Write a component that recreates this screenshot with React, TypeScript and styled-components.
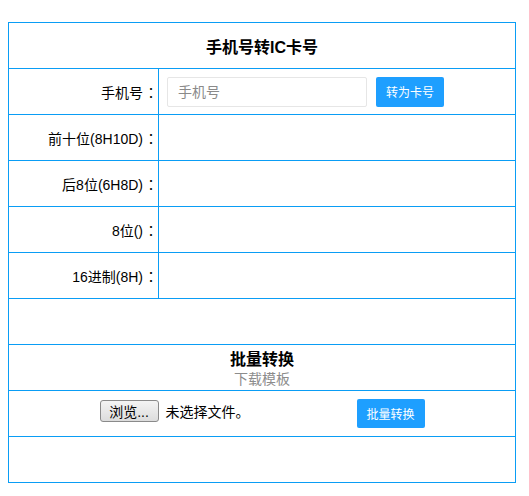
import styled, { createGlobalStyle } from 'styled-components';

const GlobalStyle = createGlobalStyle`
  html, body {
    margin: 0;
    padding: 0;
    background: #fff;
  }
  body {
    font-family: "Liberation Sans", "Noto Sans CJK SC", sans-serif;
    font-size: 14px;
    color: #000;
  }
`;

const fields = ['前十位(8H10D)', '后8位(6H8D)', '8位()', '16进制(8H)'];

const App = () => {
  return (
    <>
      <GlobalStyle />
      <Page>
        <Table>
          <TitleCell>手机号转IC卡号</TitleCell>

          <Label>
            手机号<Colon>：</Colon>
          </Label>
          <Value>
            <Input placeholder="手机号" />
            <Button>转为卡号</Button>
          </Value>

          {fields.map((name) => (
            <Row key={name}>
              <Label>
                {name}
                <Colon>：</Colon>
              </Label>
              <Value />
            </Row>
          ))}

          <FullCell />

          <FullCell $stacked>
            <SubTitle>批量转换</SubTitle>
            <Template>下载模板</Template>
          </FullCell>

          <FullCell>
            <FilePicker>
              <BrowseButton>浏览...</BrowseButton>
              <FileName>未选择文件。</FileName>
            </FilePicker>
            <Button $tall>批量转换</Button>
          </FullCell>

          <FullCell />
        </Table>
      </Page>
    </>
  );
};

const Page = styled.div`
  padding: 22px 0 0 8px;
`;

const Table = styled.div`
  display: grid;
  grid-template-columns: 150px 1fr;
  width: 506px;
  border: 1px solid #0a9df5;
  border-bottom: none;
`;

const Row = styled.div`
  display: contents;
`;

const Cell = styled.div`
  height: 45px;
  border-bottom: 1px solid #0a9df5;
  display: flex;
  align-items: center;
`;

const TitleCell = styled(Cell)`
  grid-column: 1 / -1;
  justify-content: center;
  font-size: 16px;
  font-weight: bold;
`;

const FullCell = styled(Cell)<{ $stacked?: boolean }>`
  grid-column: 1 / -1;
  justify-content: center;
  flex-direction: ${(p) => (p.$stacked ? 'column' : 'row')};
  padding-top: ${(p) => (p.$stacked ? '3px' : '0')};
  box-sizing: border-box;
  height: 46px;
`;

const Label = styled(Cell)`
  justify-content: flex-end;
  border-right: 1px solid #0a9df5;
  padding-right: 0;
`;

const Colon = styled.span`
  font-family: "Noto Sans CJK TC", sans-serif;
  margin-left: 1px;
`;

const Value = styled(Cell)`
  padding-left: 8px;
  gap: 9px;
`;

const Input = styled.input`
  box-sizing: border-box;
  width: 200px;
  height: 30px;
  padding: 0 10px;
  border: 1px solid #e6e6e6;
  border-radius: 2px;
  font-family: inherit;
  font-size: 14px;
  outline: none;

  &::placeholder {
    color: #8a8a8a;
  }
`;

const Button = styled.button<{ $tall?: boolean }>`
  box-sizing: border-box;
  height: ${(p) => (p.$tall ? '29px' : '30px')};
  width: 68px;
  padding: 0;
  border: none;
  border-radius: 2px;
  background: #1e9fff;
  color: #fff;
  font-family: inherit;
  font-size: 12px;
  cursor: pointer;
`;

const SubTitle = styled.div`
  font-size: 16px;
  font-weight: bold;
  line-height: 20px;
`;

const Template = styled.a`
  font-size: 14px;
  line-height: 19px;
  color: #8c8c8c;
`;

const FilePicker = styled.div`
  display: flex;
  align-items: center;
  gap: 7px;
  width: 248px;
  margin-right: 9px;
  margin-bottom: 5px;
`;

const BrowseButton = styled.button`
  box-sizing: border-box;
  height: 22px;
  width: 59px;
  padding: 0;
  border: 1px solid #8a8a8a;
  border-radius: 3px;
  background: linear-gradient(#f4f4f4, #dcdcdc);
  font-family: inherit;
  font-size: 14px;
  color: #000;
`;

const FileName = styled.span`
  font-size: 14px;
`;

export default App;
